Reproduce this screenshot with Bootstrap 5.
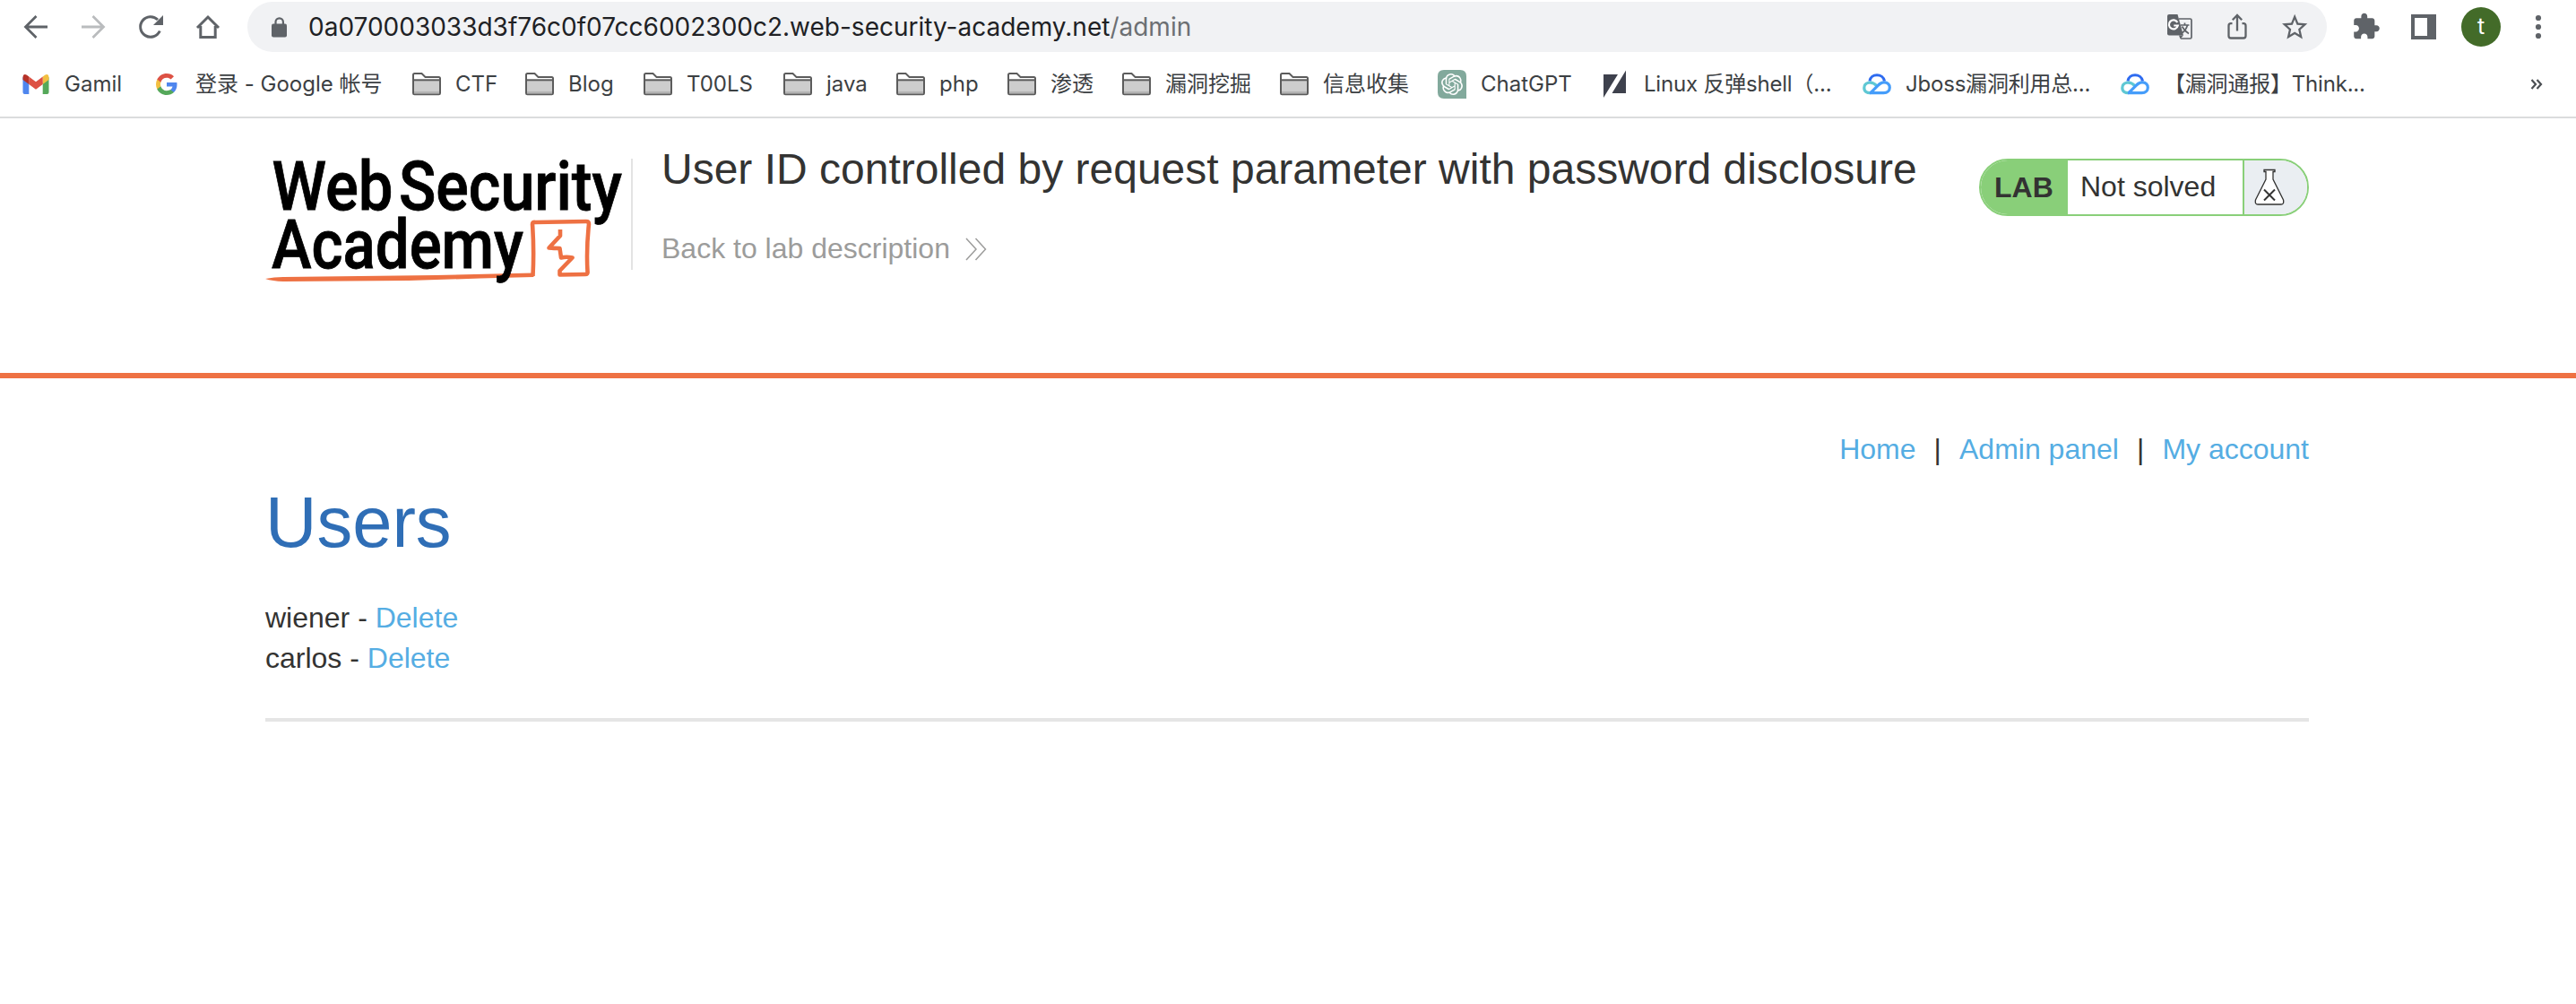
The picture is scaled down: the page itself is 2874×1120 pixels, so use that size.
<!DOCTYPE html>
<html lang="zh-CN">
<head>
<meta charset="utf-8">
<title>User ID controlled by request parameter with password disclosure</title>
<link href="https://cdn.jsdelivr.net/npm/bootstrap@5.3.0/dist/css/bootstrap.min.css" rel="stylesheet">
<style>
body{font-family:"Liberation Sans",Arial,sans-serif;font-size:32px;line-height:45px;color:#333332;background:#fff;min-height:1120px}
a{text-decoration:none;color:#55ade3}
svg{display:block;flex:none}
.chrome-ui{height:132px;border-bottom:2px solid #dbdcdd;font-family:Inter,"Noto Sans CJK SC",sans-serif}
.toolbar-row{height:60px;padding:0 42px 0 24px}
.ico-group{gap:32px}
.omni{width:2320px;height:56px;border-radius:28px;background:#f1f2f4;padding-left:24px;padding-right:20px;font-size:28px;line-height:56px;color:#202124;margin:0 28px}
.lock{margin-right:20px}
.url-path{color:#6c6f73}
.avatar-dot{width:44px;height:44px;border-radius:50%;background:#436b29;color:#fff;font-size:25px;line-height:42px;margin:0 26px}
.marks-row{height:70px;padding-left:24px;padding-right:34px;font-size:24px;line-height:32px;padding-bottom:2px}
.bm{color:#3c4043;flex:none}
.bm svg{margin-right:16px}
.w124{width:124px}.w126{width:126px}.w128{width:128px}.w132{width:132px}.w146{width:146px}.w156{width:156px}.w176{width:176px}.w182{width:182px}.w288{width:288px}.w290{width:290px}.w292{width:292px}
.bm-tight{letter-spacing:-.2px}
.page-wrap{width:2280px;margin-left:296px}
.lab-head{height:284px}
.lab-title{font-size:48px;line-height:56px;margin:29px 0 0;font-weight:400}
.lab-info{margin-left:32px}
.back-link{color:#9c9c9b;margin-top:38px;gap:17px}
.rule-v{width:2px;height:124px;background:#e3e3e3;margin-top:45px}
.status-pill{width:368px;height:64px;margin-top:45px;border:2px solid #89cf79;border-radius:32px;overflow:hidden}
.pill-lab{width:97px;background:#89cf79;line-height:61px;padding-left:15px}
.pill-text{width:195px;padding-left:14px;line-height:58px}
.pill-ico{border-left:2px solid #89cf79;background:#eaeef2;padding:8px 0 0 10px}
.rule-orange{height:6px;background:#ee7143}
.top-nav{padding-top:57px}
.nav-bar-sep{width:48.500px;text-align:center}
.users-h{font-size:79.500px;line-height:96px;color:#2f6eb6;font-weight:400;margin:11px 0 36px}
.rule-end{height:4px;background:#e5e5e5;margin-top:44px}
</style>
<script src="https://cdn.jsdelivr.net/npm/bootstrap@5.3.0/dist/js/bootstrap.bundle.min.js"></script>
</head>
<body>
<svg width="0" height="0" class="position-absolute">
<defs>
<symbol id="folder" viewBox="0 0 32 32"><path d="M1 26V5.500Q1 4 2.500 4H10.500l4 4H29.500Q31 8 31 9.500V26Q31 27.200 29.500 27.200H2.500Q1 27.200 1 26Z" fill="#fff" stroke="#5c5c5c" stroke-width="2"/><path d="M2 12H30V23.500H2Z" fill="#cdcdcd"/><path d="M2 23.500H30V26.300H2Z" fill="#b3b3b3"/><path d="M1 11.300H31" stroke="#5c5c5c" stroke-width="2"/></symbol>
<symbol id="cloud" viewBox="0 0 32 32"><g fill="none" stroke-width="3.200"><path d="M8 12.500C9 3.500 23 3.500 24.500 12.500" stroke="#2e6bf0"/><path d="M16 18C10 11 1.800 14.500 1.800 20C1.800 24.500 5.500 26 9.500 25.500" stroke="#5fc8d4"/><path d="M8 25.600H23.500C32.500 25.600 32.500 13.800 24 13.800C19 13.800 17 18 9 25.400" stroke="#459dfa"/></g></symbol>
</defs>
</svg>
<header class="chrome-ui">
<div class="toolbar-row d-flex align-items-center">
<div class="ico-group d-flex">
<svg width="32" height="32" fill="none" stroke="#5f6368" stroke-width="2.800"><path d="M29 16H5M16.500 4L4.500 16L16.500 28"/></svg>
<svg width="32" height="32" fill="none" stroke="#babcbe" stroke-width="2.800"><path d="M3 16H27M15.500 4L27.500 16L15.500 28"/></svg>
<svg width="32" height="32"><path d="M26.300 20.500A11.300 11.300 0 1 1 24 8" fill="none" stroke="#5f6368" stroke-width="3"/><path d="M30 3V14H19Z" fill="#5f6368"/></svg>
<svg width="32" height="32" fill="none" stroke="#5f6368" stroke-width="3"><path d="M4 17L16 5L28 17M7.800 15V27.500H24.200V15"/></svg>
</div>
<div class="omni d-flex align-items-center flex-shrink-0">
<svg class="lock" width="24" height="28"><rect x="3" y="10.500" width="17" height="15" rx="2" fill="#5f6368"/><path d="M7.500 11V8.500a4.200 4.200 0 0 1 8.400 0V11" fill="none" stroke="#5f6368" stroke-width="2.200"/></svg>
<span>0a070003033d3f76c0f07cc6002300c2.web-security-academy.net</span><span class="url-path">/admin</span>
<div class="ico-group d-flex ms-auto">
<svg width="32" height="32"><path d="M15 7H27.500Q29 7 29 8.500V27.500Q29 29 27.500 29H17" fill="none" stroke="#5f6368" stroke-width="1.700"/><path d="M2 4Q2 2 4 2H13.500L20 25.500H4Q2 25.500 2 23.500Z" fill="#5f6368"/><path d="M15 25.500H20L16.500 29.500Z" fill="#5f6368"/><path d="M13.300 11A5 5 0 1 0 13.800 14.500H9.300" fill="none" stroke="#fff" stroke-width="2.200"/><path d="M17 14H26.500M21.500 11.500V14M24.500 14Q23 20 17.500 23.500M18.500 15.500Q21 20.500 26 23.500" fill="none" stroke="#5f6368" stroke-width="1.700"/></svg>
<svg width="32" height="32" fill="none" stroke="#5f6368" stroke-width="2.300"><path d="M10.500 12.200H9Q6.500 12.200 6.500 14.700V26Q6.500 28.500 9 28.500H23Q25.500 28.500 25.500 26V14.700Q25.500 12.200 23 12.200H21.500M16 20.500V4M10.800 8.200L16 3L21.200 8.200"/></svg>
<svg width="32" height="32" viewBox="0 0 24 24" fill="#5f6368"><path transform="translate(-.6 -.9) scale(1.060 1.100)" d="M22 9.240l-7.190-.62L12 2 9.190 8.630 2 9.240l5.460 4.730L5.820 21 12 17.270 18.180 21l-1.630-7.030L22 9.240zM12 15.400l-3.760 2.270 1-4.280-3.320-2.880 4.380-.38L12 6.100l1.710 4.040 4.380.38-3.320 2.880 1 4.280L12 15.400z"/></svg>
</div>
</div>
<div class="ico-group d-flex">
<svg width="32" height="32" fill="#5f6368"><path transform="translate(-.5 -.6) scale(1.360)" d="M20.500 11H19V7c0-1.100-.9-2-2-2h-4V3.500C13 2.120 11.880 1 10.500 1S8 2.120 8 3.500V5H4c-1.100 0-1.990.9-1.990 2v3.800H3.500c1.490 0 2.700 1.210 2.700 2.700s-1.210 2.700-2.700 2.700H2V20c0 1.100.9 2 2 2h3.800v-1.500c0-1.490 1.210-2.700 2.700-2.700s2.700 1.210 2.700 2.700V22H17c1.100 0 2-.9 2-2v-4h1.500c1.380 0 2.500-1.120 2.500-2.500S21.880 11 20.500 11z"/></svg>
<svg width="32" height="32"><path fill-rule="evenodd" fill="#5f6368" d="M2 2H30V30H2ZM6 6V26H20V6Z"/></svg>
</div>
<div class="avatar-dot text-center flex-shrink-0">t</div>
<svg width="32" height="32" fill="#5f6368"><circle cx="16" cy="6" r="3.100"/><circle cx="16" cy="16" r="3.100"/><circle cx="16" cy="26" r="3.100"/></svg>
</div>
<nav class="marks-row d-flex align-items-center text-nowrap">
<a href="#" class="bm w146 d-flex align-items-center"><svg width="32" height="32"><path d="M1.500 8V25Q1.500 27 3.500 27H8.300V13Z" fill="#4f86ee"/><path d="M30.500 8V25Q30.500 27 28.500 27H23.700V13Z" fill="#55a85a"/><path d="M23.700 7.500L26 5.700Q30.500 3.500 30.500 9V11L23.700 16Z" fill="#f2bf41"/><path d="M8.300 7.500L16 13.300L23.700 7.500V16L16 21.700L8.300 16Z" fill="#dd5144"/><path d="M8.300 7.500L6 5.700Q1.500 3.500 1.500 9V11L8.300 16Z" fill="#b63228"/></svg>Gamil</a>
<a href="#" class="bm w290 d-flex align-items-center"><svg width="32" height="32" viewBox="0 0 32 32"><g transform="translate(4 4)"><path fill="#4f86ee" d="M23.500 12.300c0-.8-.1-1.600-.2-2.300H12v4.500h6.500c-.3 1.500-1.100 2.800-2.400 3.600v3h3.900c2.200-2.100 3.500-5.100 3.500-8.800z"/><path fill="#55a85a" d="M12 24c3.200 0 6-1.100 8-2.900l-3.900-3c-1.100.7-2.500 1.200-4.100 1.200-3.100 0-5.800-2.100-6.700-5H1.300v3.100C3.300 21.300 7.300 24 12 24z"/><path fill="#f2bf41" d="M5.300 14.300c-.5-1.500-.5-3.100 0-4.600V6.600H1.300c-1.700 3.400-1.700 7.400 0 10.800z"/><path fill="#dd5144" d="M12 4.800c1.800 0 3.300.6 4.600 1.800l3.400-3.400C18 1.200 15.200 0 12 0 7.300 0 3.300 2.700 1.300 6.600l4 3.100c.9-2.900 3.600-4.900 6.700-4.900z"/></g></svg>登录 - Google 帐号</a>
<a href="#" class="bm w126 d-flex align-items-center"><svg width="32" height="32"><use href="#folder"/></svg>CTF</a>
<a href="#" class="bm w132 d-flex align-items-center"><svg width="32" height="32"><use href="#folder"/></svg>Blog</a>
<a href="#" class="bm w156 d-flex align-items-center"><svg width="32" height="32"><use href="#folder"/></svg>T00LS</a>
<a href="#" class="bm w126 d-flex align-items-center"><svg width="32" height="32"><use href="#folder"/></svg>java</a>
<a href="#" class="bm w124 d-flex align-items-center"><svg width="32" height="32"><use href="#folder"/></svg>php</a>
<a href="#" class="bm w128 d-flex align-items-center"><svg width="32" height="32"><use href="#folder"/></svg>渗透</a>
<a href="#" class="bm w176 d-flex align-items-center"><svg width="32" height="32"><use href="#folder"/></svg>漏洞挖掘</a>
<a href="#" class="bm w176 d-flex align-items-center"><svg width="32" height="32"><use href="#folder"/></svg>信息收集</a>
<a href="#" class="bm w182 d-flex align-items-center"><svg width="32" height="32"><path d="M7 0H25Q32 0 32 7V32H7Q0 32 0 25V7Q0 0 7 0Z" fill="#82a99c"/><path fill="#fff" transform="translate(4 4)" d="M22.2819 9.8211a5.9847 5.9847 0 0 0-.5157-4.9108 6.0462 6.0462 0 0 0-6.5098-2.900A6.0651 6.0651 0 0 0 4.9807 4.1818a5.9847 5.9847 0 0 0-3.9977 2.900 6.0462 6.0462 0 0 0 .7427 7.0966 5.980 5.980 0 0 0 .511 4.9107 6.051 6.051 0 0 0 6.5146 2.9001A5.9847 5.9847 0 0 0 13.2599 24a6.0557 6.0557 0 0 0 5.7718-4.2058 5.9894 5.9894 0 0 0 3.9977-2.9001 6.0557 6.0557 0 0 0-.7475-7.0729zm-9.022 12.6081a4.4755 4.4755 0 0 1-2.8764-1.0408l.1419-.0804 4.7783-2.7582a.7948.7948 0 0 0 .3927-.6813v-6.7369l2.020 1.1686a.071.071 0 0 1 .038.052v5.5826a4.504 4.504 0 0 1-4.4945 4.4944zm-9.6607-4.1254a4.4708 4.4708 0 0 1-.5346-3.0137l.142.0852 4.783 2.7582a.7712.7712 0 0 0 .7806 0l5.8428-3.3685v2.3324a.0804.0804 0 0 1-.0332.0615L9.740 19.9502a4.4992 4.4992 0 0 1-6.1408-1.6464zM2.3408 7.8956a4.485 4.485 0 0 1 2.3655-1.9728V11.600a.7664.7664 0 0 0 .3879.6765l5.8144 3.3543-2.0201 1.1685a.0757.0757 0 0 1-.071 0l-4.8303-2.7865A4.504 4.504 0 0 1 2.3408 7.872zm16.5963 3.8558L13.1038 8.364 15.1192 7.200a.0757.0757 0 0 1 .071 0l4.8303 2.7913a4.4944 4.4944 0 0 1-.6765 8.1042v-5.6772a.790.790 0 0 0-.407-.667zm2.0107-3.0231l-.142-.0852-4.7735-2.7818a.7759.7759 0 0 0-.7854 0L9.409 9.2297V6.8974a.0662.0662 0 0 1 .0284-.0615l4.8303-2.7866a4.4992 4.4992 0 0 1 6.6802 4.660zM8.3065 12.863l-2.020-1.1638a.0804.0804 0 0 1-.038-.0567V6.0742a4.4992 4.4992 0 0 1 7.3757-3.4537l-.142.0805L8.704 5.459a.7948.7948 0 0 0-.3927.6813zm1.0976-2.3654l2.602-1.4998 2.6069 1.4998v2.9994l-2.5974 1.4997-2.6067-1.4997Z"/></svg>ChatGPT</a>
<a href="#" class="bm bm-tight w292 d-flex align-items-center"><svg width="32" height="32"><path d="M3 5H19L3 31ZM28 .5V26H12.500Z" fill="#3e414d"/></svg>Linux 反弹shell（...</a>
<a href="#" class="bm bm-tight w288 d-flex align-items-center"><svg width="32" height="32"><use href="#cloud"/></svg>Jboss漏洞利用总...</a>
<a href="#" class="bm bm-tight d-flex align-items-center"><svg width="32" height="32"><use href="#cloud"/></svg>【漏洞通报】Think...</a>
<svg class="ms-auto" width="20" height="20" fill="none" stroke="#4b4f53" stroke-width="2.200"><path d="M4.500 5L9 10L4.500 15M10.500 5L15 10L10.500 15"/></svg>
</nav>
</header>
<section class="lab-head page-wrap d-flex align-items-start">
<svg width="408" height="200">
<g transform="translate(0 38)">
<path d="M0 141Q10 139 20 139L190 137L299 134.500L299.500 139L240 140.500L160 143L20 144Q8 143.500 0 141Z" fill="#ee7143"/>
<path d="M298.500 138Q300 108 298 80Q298 77.500 301 78L358 77Q361 77 361 80Q358 108 359.500 133Q360 136 357 136L328.500 136.500L328.500 132L342.500 117.500Q336 116 330 117.500L328.500 107Q322 107 316.500 106.500L329 93V86" fill="none" stroke="#ee7143" stroke-width="4.600" stroke-linejoin="round"/>
<g font-family="Roboto" font-weight="500" font-size="76" fill="#000" stroke="#000" stroke-width=".8">
<text x="7.500" y="63.500" textLength="135" lengthAdjust="spacingAndGlyphs">Web</text>
<text x="149" y="63.500" textLength="249" lengthAdjust="spacingAndGlyphs">Security</text>
<text x="7" y="128.500" textLength="281" lengthAdjust="spacingAndGlyphs">Academy</text>
</g>
</g>
</svg>
<div class="rule-v"></div>
<div class="lab-info">
<h1 class="lab-title">User ID controlled by request parameter with password disclosure</h1>
<a href="#" class="back-link d-flex align-items-center">Back to lab description<svg width="26" height="28" fill="none" stroke="#9c9c9b" stroke-width="1.500"><path d="M1 2L12 14L1 26M11.500 2L22.500 14L11.500 26"/></svg></a>
</div>
<div class="status-pill d-flex ms-auto">
<b class="pill-lab">LAB</b>
<span class="pill-text">Not solved</span>
<div class="pill-ico flex-grow-1"><svg width="36" height="42" fill="#fff" stroke="#333332" stroke-width="1.300"><path d="M12 2.500H24V4.500H22V13L33.500 36Q34.500 41 31 41H5Q1.500 41 2.500 36L14 13V4.500H12Z"/><path d="M12 24.500L24 36.500M24 24.500L12 36.500" stroke-width="2"/></svg></div>
</div>
</section>
<div class="rule-orange"></div>
<main class="page-wrap">
<nav class="top-nav d-flex justify-content-end"><a href="#">Home</a><span class="nav-bar-sep">|</span><a href="#">Admin panel</a><span class="nav-bar-sep">|</span><a href="#">My account</a></nav>
<h2 class="users-h">Users</h2>
<div>wiener - <a href="#">Delete</a></div>
<div>carlos - <a href="#">Delete</a></div>
<div class="rule-end"></div>
</main>
</body>
</html>
